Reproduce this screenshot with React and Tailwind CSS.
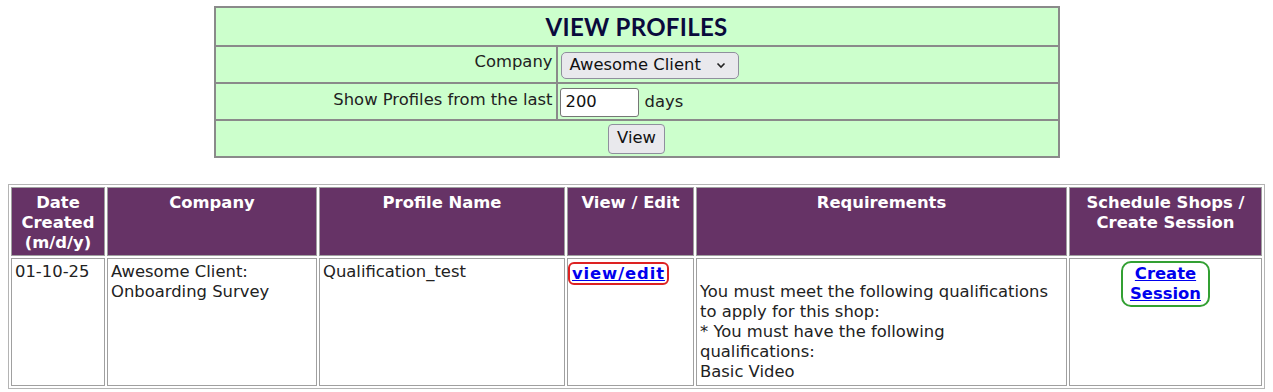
import React from 'react';

const rows = [
  {
    date: '01-10-25',
    company: 'Awesome Client: Onboarding Survey',
    profile: 'Qualification_test',
    reqs: [
      'You must meet the following qualifications',
      'to apply for this shop:',
      '* You must have the following',
      'qualifications:',
      'Basic Video',
    ],
  },
];

function SearchBox() {
  return (
    <table className="mx-auto mt-[6px] w-[846px] border-collapse border-2 border-[#8a8a8a] bg-[#ccffcc] text-[16.4px] text-[#222]">
      <tbody>
        <tr>
          <td colSpan={2} className="h-[39px] border-2 border-[#8a8a8a] text-center align-middle">
            <span className="text-[24px] font-bold tracking-[0.3px] text-[#0a0a3c] font-['Lato','DejaVu_Sans',sans-serif]">
              VIEW PROFILES
            </span>
          </td>
        </tr>
        <tr>
          <td className="w-[342px] h-[37px] border-2 border-[#8a8a8a] pr-[3px] text-right align-top pt-[3px]">Company</td>
          <td className="border-2 border-[#8a8a8a] px-[3px] pt-[2px] align-middle">
            <div className="flex h-[27px] w-[178px] items-center justify-between rounded-[5px] border border-[#8f8f9d] bg-[#e9e9ed] pl-[8px] pr-[12px] text-[#111]">
              <span>Awesome Client</span>
              <svg width="10" height="7" viewBox="0 0 10 7" fill="none">
                <path d="M1.5 1.5 L5 5 L8.5 1.5" stroke="#222" strokeWidth="1.6" />
              </svg>
            </div>
          </td>
        </tr>
        <tr>
          <td className="h-[37px] border-2 border-[#8a8a8a] pr-[3px] text-right align-top pt-[4px]">Show Profiles from the last</td>
          <td className="border-2 border-[#8a8a8a] px-[2px] pt-[2px] align-middle">
            <div className="flex items-center gap-[6px]">
              <div className="flex h-[29px] w-[79px] items-center rounded-[3px] border border-[#767676] bg-white pl-[5px] text-[#111]">200</div>
              <span>days</span>
            </div>
          </td>
        </tr>
        <tr>
          <td colSpan={2} className="h-[37px] border-2 border-[#8a8a8a] text-center align-middle">
            <button className="h-[30px] w-[57px] rounded-[4px] border border-[#8f8f9d] bg-[#e9e9ed] text-[#111]">View</button>
          </td>
        </tr>
      </tbody>
    </table>
  );
}

function Th({ children, w }) {
  return (
    <th className={`${w} border border-[#a0a0a0] bg-[#663366] px-[3px] pt-[5px] pb-[2px] text-center align-top font-bold leading-[20px] text-white`}>
      {children}
    </th>
  );
}

function ProfilesTable() {
  return (
    <table className="mx-[8px] mt-[26px] w-[calc(100%-16px)] table-fixed border-separate border-spacing-[2px] border border-[#b4b4b4] text-[16.4px] leading-[20px] text-[#222]">
      <thead>
        <tr className="h-[67px]">
          <Th w="w-[94px]">Date<br />Created<br />(m/d/y)</Th>
          <Th w="w-[210px]">Company</Th>
          <Th w="w-[246px]">Profile Name</Th>
          <Th w="w-[127px]">View / Edit</Th>
          <Th w="w-[371px]">Requirements</Th>
          <Th w="w-auto">Schedule Shops /<br />Create Session</Th>
        </tr>
      </thead>
      <tbody>
        {rows.map((r) => (
          <tr key={r.profile}>
            <td className="border border-[#a0a0a0] px-[3px] pt-[3px] align-top">{r.date}</td>
            <td className="border border-[#a0a0a0] px-[3px] pt-[3px] align-top">{r.company}</td>
            <td className="border border-[#a0a0a0] px-[3px] pt-[3px] align-top">{r.profile}</td>
            <td className="border border-[#a0a0a0] pl-0 pt-[3px] align-top">
              <span className="inline-block rounded-[6px] border-2 border-[#dd2222] px-[2px] leading-[19px]">
                <a href="#" className="font-bold tracking-[0.9px] text-[#0000ee] underline">view/edit</a>
              </span>
            </td>
            <td className="border border-[#a0a0a0] px-[3px] py-[3px] align-middle">
              <br />
              {r.reqs.map((t) => (
                <div key={t}>{t}</div>
              ))}
            </td>
            <td className="border border-[#a0a0a0] px-[3px] pt-[2px] text-center align-top">
              <span className="inline-block rounded-[10px] border-2 border-[#33a033] px-[7px] py-[1px]">
                <a href="#" className="font-bold text-[#0000ee] underline">Create<br />Session</a>
              </span>
            </td>
          </tr>
        ))}
      </tbody>
    </table>
  );
}

export default function App() {
  return (
    <div className="min-h-[392px] bg-white font-['DejaVu_Sans',sans-serif]">
      <SearchBox />
      <ProfilesTable />
    </div>
  );
}
